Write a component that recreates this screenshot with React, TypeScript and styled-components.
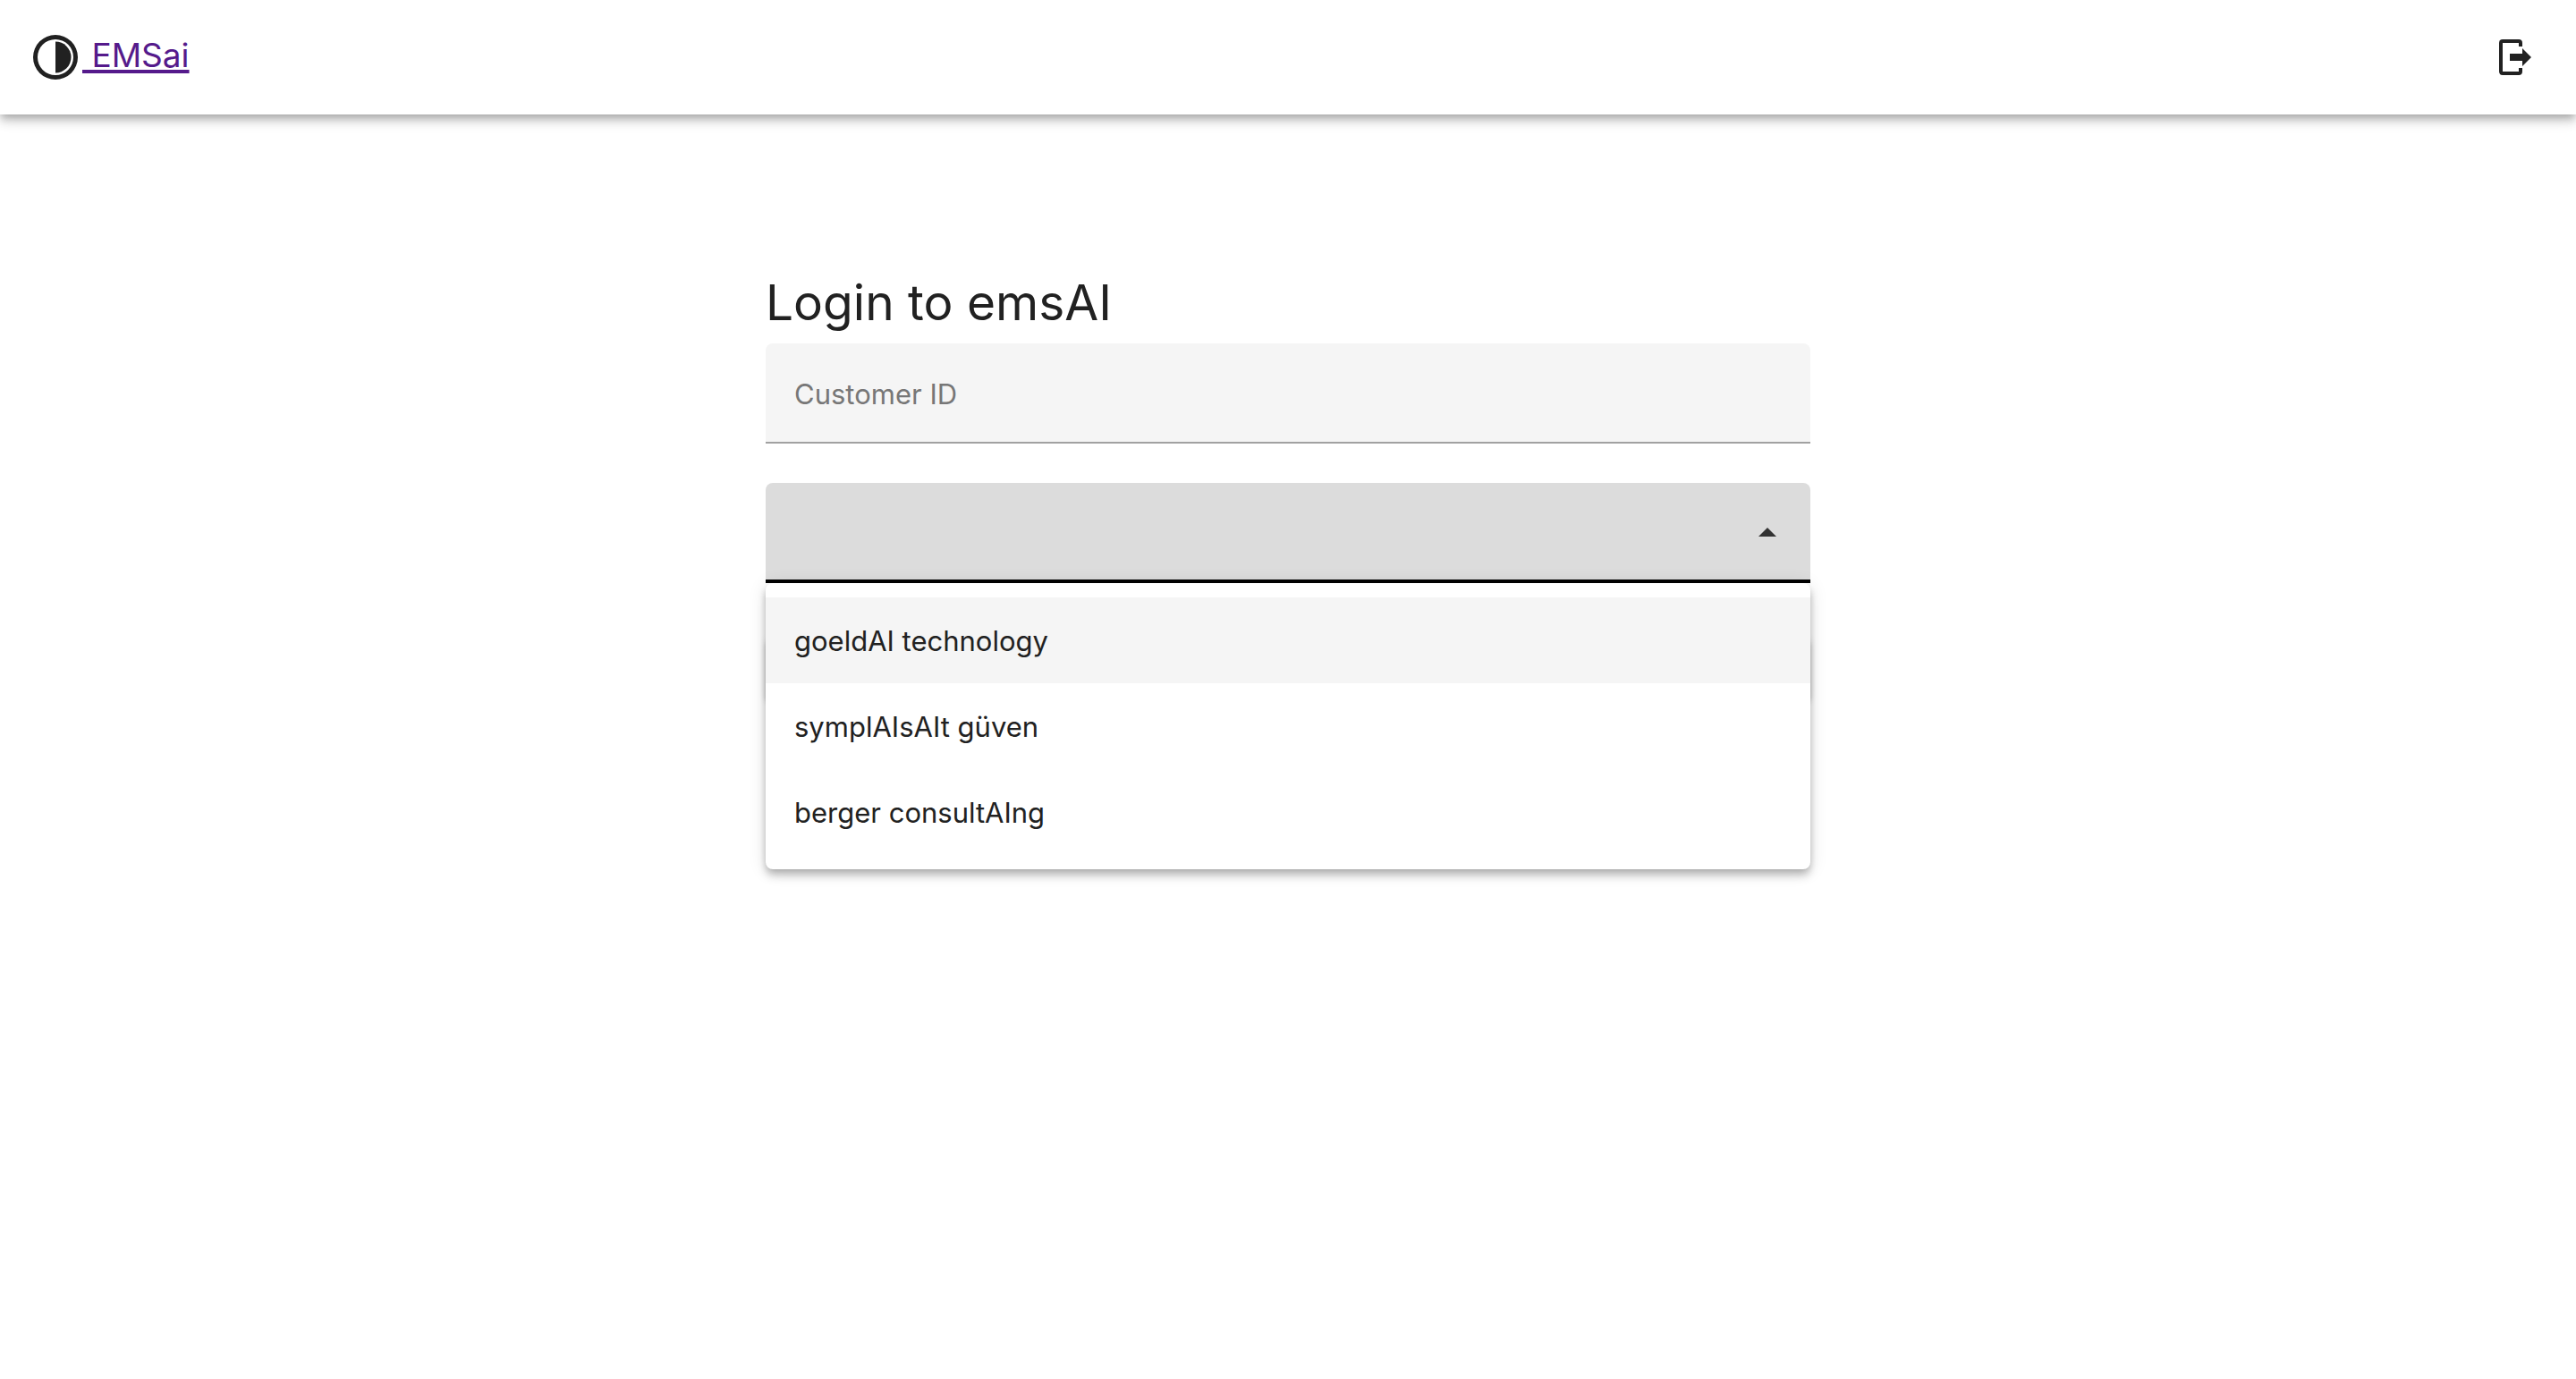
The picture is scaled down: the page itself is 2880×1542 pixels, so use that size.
import { useState } from "react";
import type { MouseEvent } from "react";
import styled, { createGlobalStyle } from "styled-components";

const GlobalStyle = createGlobalStyle`
  *, *::before, *::after { box-sizing: border-box; }
  body {
    margin: 0;
    background: #fff;
    color: #212121;
    font-family: Inter, "Liberation Sans", sans-serif;
    font-size: 31px;
    line-height: 48px;
  }
`;

const Page = styled.div`
  min-height: 100vh;
`;

const AppBar = styled.header`
  position: relative;
  display: flex;
  align-items: center;
  justify-content: space-between;
  height: 128px;
  padding: 0 20px 0 32px;
  background: #fff;
  box-shadow:
    0 4px 8px -2px rgba(0, 0, 0, 0.2),
    0 8px 10px 0 rgba(0, 0, 0, 0.14),
    0 2px 20px 0 rgba(0, 0, 0, 0.12);
`;

const Brand = styled.div`
  display: flex;
  align-items: center;
`;

const BrandIcon = styled.svg`
  width: 60px;
  height: 60px;
  fill: #212121;
`;

const BrandLink = styled.a`
  padding-bottom: 4px;
  color: #551a8b;
  font-size: 37px;
  line-height: 64px;
  white-space: pre;
  text-decoration: underline;
  text-decoration-thickness: 4px;
  text-underline-offset: 3px;
  text-decoration-skip-ink: none;
`;

const IconButton = styled.button`
  display: flex;
  padding: 24px;
  border: 0;
  border-radius: 50%;
  background: transparent;
  cursor: pointer;

  svg {
    width: 48px;
    height: 48px;
    fill: #212121;
  }
`;

const Main = styled.main`
  width: 100%;
  max-width: 1232px;
  margin: 0 auto;
  padding: 176px 32px 0;
`;

const Form = styled.form`
  display: flex;
  flex-direction: column;
`;

const Title = styled.h1`
  margin: 0;
  padding-bottom: 12px;
  font-size: 55px;
  font-weight: 400;
  line-height: 68px;
`;

const TextField = styled.input`
  width: 100%;
  height: 112px;
  margin-bottom: 44px;
  padding: 2px 32px 0;
  border: 0;
  border-bottom: 2px solid #a1a1a1;
  border-radius: 8px 8px 0 0;
  outline: none;
  background: #f5f5f5;
  color: #212121;
  font: inherit;

  &::placeholder {
    color: #777;
    opacity: 1;
  }
`;

const SelectField = styled.div`
  position: relative;
  display: grid;
  margin-bottom: 60px;
`;

const Select = styled.select`
  grid-area: 1 / 1;
  height: 112px;
  padding: 0 96px 0 32px;
  appearance: none;
  border: 0;
  border-bottom: 4px solid #000;
  border-radius: 8px 8px 0 0;
  outline: none;
  background: #dcdcdc;
  color: #212121;
  font: inherit;
`;

const Caret = styled.svg<{ $open: boolean }>`
  grid-area: 1 / 1;
  place-self: center end;
  width: 48px;
  height: 48px;
  margin-right: 24px;
  fill: #333;
  pointer-events: none;
  transform: ${({ $open }) => ($open ? "none" : "rotate(180deg)")};
`;

const Menu = styled.ul`
  position: absolute;
  z-index: 1;
  top: 100%;
  left: 0;
  right: 0;
  margin: 0;
  padding: 16px 0;
  border-radius: 8px;
  background: #fff;
  list-style: none;
  box-shadow:
    0 4px 8px -2px rgba(0, 0, 0, 0.2),
    0 8px 10px 0 rgba(0, 0, 0, 0.14),
    0 2px 20px 0 rgba(0, 0, 0, 0.12);
`;

const MenuItem = styled.li<{ $active: boolean }>`
  display: flex;
  align-items: center;
  height: 96px;
  padding: 2px 32px 0;
  background: ${({ $active }) => ($active ? "#f5f5f5" : "transparent")};
  cursor: pointer;
`;

const SubmitButton = styled.button`
  height: 72px;
  border: 0;
  border-radius: 8px;
  background: #212121;
  color: #fff;
  font: inherit;
  box-shadow:
    0 6px 2px -4px rgba(0, 0, 0, 0.2),
    0 4px 4px 0 rgba(0, 0, 0, 0.14),
    0 2px 10px 0 rgba(0, 0, 0, 0.12);
`;

const customers = ["goeldAI technology", "symplAIsAIt güven", "berger consultAIng"];

export default function App() {
  const [open, setOpen] = useState(true);
  const [active, setActive] = useState(0);
  const [customer, setCustomer] = useState("");

  const toggleMenu = (event: MouseEvent) => {
    event.preventDefault();
    setOpen((value) => !value);
  };

  const choose = (name: string) => {
    setCustomer(name);
    setOpen(false);
  };

  return (
    <Page>
      <GlobalStyle />
      <AppBar>
        <Brand>
          <BrandIcon viewBox="0 0 24 24" aria-hidden="true">
            <path d="M12 2a10 10 0 1 0 0 20 10 10 0 0 0 0-20zm0 18a8 8 0 1 1 0-16 8 8 0 0 1 0 16z" />
            <path d="M12 5v14a7 7 0 0 0 0-14z" />
          </BrandIcon>
          <BrandLink href="#">{" EMSai"}</BrandLink>
        </Brand>
        <IconButton type="button" aria-label="Log out">
          <svg viewBox="0 0 24 24" aria-hidden="true">
            <path d="M5 2h9a2 2 0 0 1 2 2v2h-2V4H5v16h9v-2h2v2a2 2 0 0 1-2 2H5a2 2 0 0 1-2-2V4a2 2 0 0 1 2-2z" />
            <path d="M9 10h7V7l5 5-5 5v-3H9z" />
          </svg>
        </IconButton>
      </AppBar>
      <Main>
        <Form onSubmit={(event) => event.preventDefault()}>
          <Title>Login to emsAI</Title>
          <TextField type="text" aria-label="Customer ID" placeholder="Customer ID" />
          <SelectField>
            <Select
              aria-label="Customer"
              value={customer}
              onMouseDown={toggleMenu}
              onChange={(event) => setCustomer(event.target.value)}
            >
              <option value="" />
              {customers.map((name) => (
                <option key={name} value={name}>
                  {name}
                </option>
              ))}
            </Select>
            <Caret $open={open} viewBox="0 0 24 24" aria-hidden="true">
              <path d="M7 14l5-5 5 5z" />
            </Caret>
            {open && (
              <Menu role="listbox" aria-label="Customer">
                {customers.map((name, index) => (
                  <MenuItem
                    key={name}
                    role="option"
                    aria-selected={customer === name}
                    $active={index === active}
                    onMouseEnter={() => setActive(index)}
                    onClick={() => choose(name)}
                  >
                    {name}
                  </MenuItem>
                ))}
              </Menu>
            )}
          </SelectField>
          <SubmitButton type="submit">Login</SubmitButton>
        </Form>
      </Main>
    </Page>
  );
}
